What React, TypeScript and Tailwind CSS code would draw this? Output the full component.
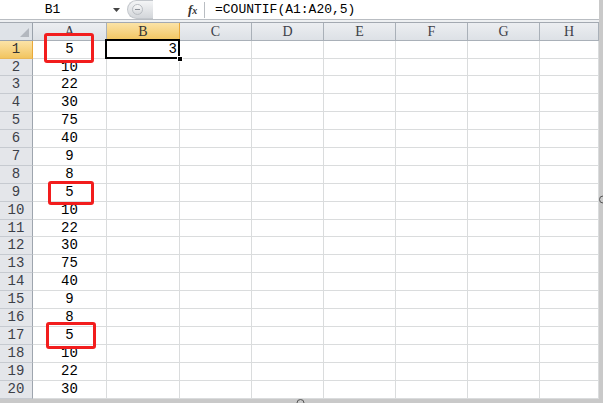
import React from "react";

const cols = ["A", "B", "C", "D", "E", "F", "G", "H"];
const values = [5, 10, 22, 30, 75, 40, 9, 8, 5, 10, 22, 30, 75, 40, 9, 8, 5, 10, 22, 30];
// rows are 18px tall except a couple that Excel rounds down
const rowHeights = values.map((_, i) => (i === 1 || i === 10 ? 17 : 18));

const mono = { fontFamily: '"Liberation Mono", "DejaVu Sans Mono", monospace' };
const serif = { fontFamily: '"Liberation Serif", "DejaVu Serif", serif' };

const FormulaBar = () => (
  <div className="flex items-center h-[20px] bg-white border-b border-[#b9bdc2]">
    <div className="w-[105px] text-center text-[13px] text-black leading-none">B1</div>
    <div className="w-[22px] flex justify-center">
      <svg width="7" height="4" viewBox="0 0 7 4">
        <polygon points="0,0 7,0 3.5,4" fill="#444" />
      </svg>
    </div>
    {/* formula bar splitter pill */}
    <div className="relative h-[19px] w-[26px] rounded-l-full bg-linear-to-b from-[#f4f5f6] to-[#d3d6da] border border-r-0 border-[#c3c7cc] flex items-center pl-[4px]">
      <div className="w-[11px] h-[11px] rounded-full bg-linear-to-b from-[#fafafa] to-[#d5d8dc] border border-[#b9bdc2] flex items-center justify-center">
        <div className="w-[5px] h-px bg-[#8a8f96]" />
      </div>
    </div>
    <div className="w-[35px]" />
    <div className="w-[15px] text-[13px] leading-none font-bold italic text-[#333]" style={serif}>
      f<span className="text-[10px]">x</span>
    </div>
    <div className="w-px h-[16px] bg-[#b9bdc2] ml-[1px]" />
    <div className="pl-[10px] text-[13px] leading-none text-black">=COUNTIF(A1:A20,5)</div>
  </div>
);

const HeaderRow = () => (
  <>
    <div className="relative h-[18px] bg-[#dfe3e8] border-r border-b border-[#9aa2ab]">
      <svg className="absolute right-[3px] bottom-[3px]" width="9" height="9" viewBox="0 0 9 9">
        <polygon points="9,0 9,9 0,9" fill="#b3b8bf" />
      </svg>
    </div>
    {cols.map((c) => {
      const sel = c === "B";
      return (
        <div
          key={c}
          style={serif}
          className={
            sel
              ? "h-[18px] flex items-center justify-center text-[14px] text-[#333] bg-linear-to-b from-[#fbe3a6] to-[#f2c55f] border-r border-b border-[#e9a93a]"
              : "h-[18px] flex items-center justify-center text-[14px] text-[#3c4048] bg-linear-to-b from-[#eceef1] to-[#dde1e6] border-r border-b border-[#a9b0b8]"
          }
        >
          {c}
        </div>
      );
    })}
  </>
);

const Row = ({ n, v, h }: { n: number; v: number; h: number }) => {
  const sel = n === 1;
  return (
    <>
      <div
        className={
          sel
            ? "flex items-center justify-center text-[14px] text-[#333] bg-linear-to-b from-[#fbe3a6] to-[#f2c55f] border-r border-b border-r-[#e9a93a] border-b-[#e9b85a]"
            : "flex items-center justify-center text-[14px] text-[#3c4048] bg-[#e4e6ea] border-r border-b border-r-[#9ea5ae] border-b-[#c6cad0]"
        }
        style={{ height: h }}
      >
        {n}
      </div>
      <div className="flex items-center justify-center text-[14px] text-black border-r border-b border-[#dadcdd]" style={{ height: h }}>
        {v}
      </div>
      {cols.slice(1).map((c) =>
        c === "B" && sel ? (
          <div key={c} className="relative border-r border-b border-[#dadcdd]" style={{ height: h }}>
            <div className="absolute -left-[2px] -top-[2px] -right-[1px] -bottom-[1px] border-2 border-black flex items-center justify-end pr-[1px] text-[14px] text-black">
              3
            </div>
            <div className="absolute -right-[4px] -bottom-[4px] w-[6px] h-[6px] bg-black border border-white" />
          </div>
        ) : (
          <div key={c} className="border-r border-b border-[#dadcdd]" style={{ height: h }} />
        )
      )}
    </>
  );
};

const RedBox = ({ x, y, w, h }: { x: number; y: number; w: number; h: number }) => (
  <div
    className="absolute border-[3px] border-[#f21d1d] rounded-[3px]"
    style={{ left: x, top: y, width: w, height: h }}
  />
);

export default function App() {
  return (
    <div className="relative w-[603px] h-[403px] overflow-hidden bg-white flex" style={mono}>
      <div className="flex-1 flex flex-col">
        <FormulaBar />
        <div className="h-[3px] bg-[#eef0f2] border-b border-[#a3a9b1]" />
        <div className="grid grid-cols-[33px_74px_73px_72px_72px_72px_72px_72px_59px]">
          <HeaderRow />
          {values.map((v, i) => (
            <Row key={i} n={i + 1} v={v} h={rowHeights[i]} />
          ))}
        </div>
        <div className="relative flex-1 bg-[#c9c9c9]">
          <svg className="absolute left-[296px] top-0" width="9" height="4" viewBox="0 0 9 4">
            <path d="M1 4 A3.5 3.5 0 0 1 8 4" fill="none" stroke="#555" strokeWidth="1" />
          </svg>
        </div>
      </div>
      <div className="relative w-[4px] bg-[#c9c9c9]">
        <svg className="absolute left-0 top-[195px]" width="4" height="9" viewBox="0 0 4 9">
          <path d="M4 1 A3.5 3.5 0 0 0 4 8" fill="none" stroke="#555" strokeWidth="1" />
        </svg>
      </div>

      <RedBox x={44} y={33} w={50} h={30} />
      <RedBox x={48} y={181} w={46} h={24} />
      <RedBox x={46} y={322} w={50} h={27} />
    </div>
  );
}
